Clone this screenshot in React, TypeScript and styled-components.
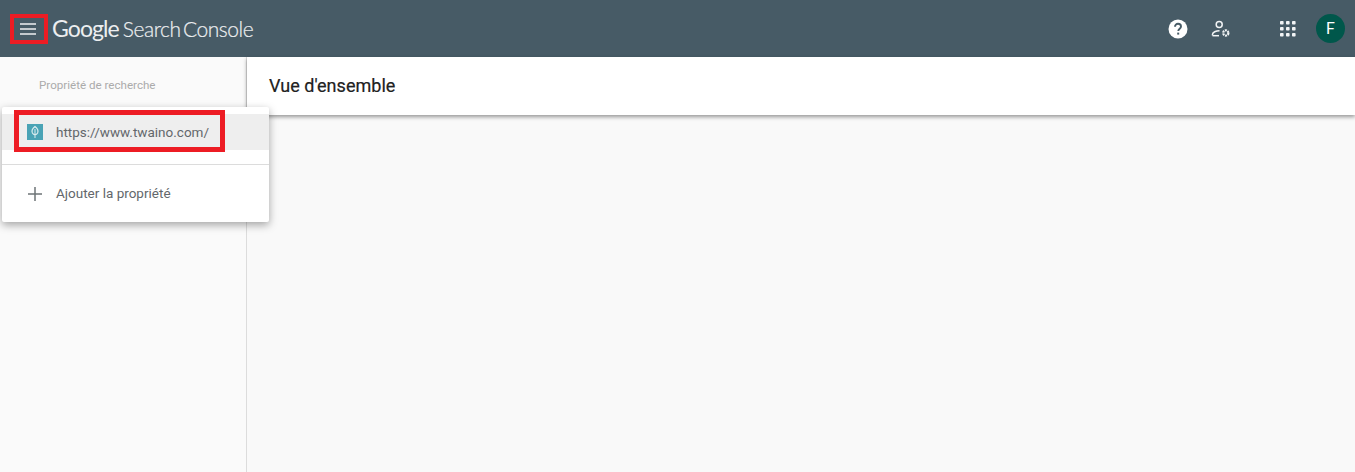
import React from "react";
import styled, { createGlobalStyle } from "styled-components";

const GlobalStyle = createGlobalStyle`
  html, body {
    margin: 0;
    padding: 0;
    height: 100%;
    overflow: hidden;
    background: #fafafa;
    font-family: Roboto, "Liberation Sans", sans-serif;
  }
`;

const Page = styled.div`
  width: 1355px;
  height: 472px;
  display: flex;
  flex-direction: column;
  position: relative;
  overflow: hidden;
`;

const TopBar = styled.header`
  height: 57px;
  flex: none;
  background: #475b66;
  display: flex;
  align-items: center;
  padding: 0 10px;
  box-sizing: border-box;
`;

const MenuButton = styled.button`
  width: 38px;
  height: 30px;
  margin-top: 1px;
  padding: 0 2px 0 0;
  background: transparent;
  border: 4px solid #ed1c24;
  display: flex;
  align-items: center;
  justify-content: center;
  box-sizing: border-box;
`;

const Logo = styled.div`
  margin-left: 5px;
  margin-bottom: 2px;
  color: #eceef0;
  display: flex;
  align-items: baseline;
  font-family: Lato, sans-serif;
  white-space: nowrap;
`;

const LogoGoogle = styled.span`
  font-size: 23px;
  letter-spacing: -0.9px;
  font-weight: 400;
  margin-left: -1px;
`;

const LogoProduct = styled.span`
  font-size: 21px;
  font-weight: 300;
  margin-left: 4px;
  letter-spacing: -0.45px;
  word-spacing: -3px;
  -webkit-text-stroke: 0.2px #eceef0;
`;

const Spacer = styled.div`
  flex: 1;
`;

const IconSlot = styled.div<{ $gap: number }>`
  display: flex;
  margin-left: ${(p) => p.$gap}px;
`;

const Avatar = styled.div`
  width: 29px;
  height: 29px;
  margin-left: 20px;
  border-radius: 50%;
  background: #00574b;
  color: #fff;
  font-size: 16px;
  display: flex;
  align-items: center;
  justify-content: center;
`;

const Body = styled.div`
  flex: 1;
  display: flex;
`;

const SideBar = styled.aside`
  width: 247px;
  flex: none;
  box-sizing: border-box;
  background: #fafafa;
  border-right: 1px solid #dcdcdc;
  padding: 21px 0 0 39px;
`;

const SideLabel = styled.div`
  font-size: 11.6px;
  line-height: 14px;
  color: #ababab;
`;

const Main = styled.main`
  flex: 1;
  background: #f9f9f9;
`;

const TitleBar = styled.div`
  height: 58px;
  box-sizing: border-box;
  background: #fff;
  padding: 0 0 2px 22px;
  display: flex;
  align-items: center;
  font-size: 18px;
  font-weight: 400;
  letter-spacing: 0.02px;
  -webkit-text-stroke: 0.2px #212121;
  color: #212121;
  box-shadow: 0 2px 4px rgba(0, 0, 0, 0.4);
`;

const PropertyMenu = styled.div`
  position: absolute;
  left: 2px;
  top: 107px;
  width: 267px;
  height: 115px;
  background: #fff;
  border-radius: 2px;
  box-shadow: 0 3px 8px rgba(0, 0, 0, 0.35);
  padding-top: 7px;
  box-sizing: border-box;
`;

const PropertyRow = styled.div<{ $selected?: boolean }>`
  height: ${(p) => (p.$selected ? 36 : 57)}px;
  display: flex;
  align-items: center;
  padding-left: 25px;
  background: ${(p) => (p.$selected ? "#eeeeee" : "transparent")};
  color: #63676b;
  font-size: 13.5px;
`;

const PropertyLabel = styled.span<{ $tight?: boolean }>`
  margin-top: ${(p) => (p.$tight ? -2 : 0)}px;
`;

const RowIcon = styled.div`
  width: 16px;
  height: 16px;
  margin-right: 13px;
  display: flex;
  align-items: center;
  justify-content: center;
`;

const Divider = styled.div`
  height: 1px;
  margin-top: 14px;
  background: #dcdcdc;
`;

const UrlHighlight = styled.div`
  position: absolute;
  left: 14px;
  top: 110px;
  width: 211px;
  height: 42px;
  box-sizing: border-box;
  border: 5px solid #ed1c24;
`;

export default function App() {
  return (
    <Page>
      <GlobalStyle />
      <TopBar>
        <MenuButton aria-label="Menu">
          <svg width="18" height="12" viewBox="0 0 18 12">
            <path d="M1 1h16M1 6h16M1 11h16" stroke="#eef0f1" strokeWidth="1.6" fill="none" />
          </svg>
        </MenuButton>
        <Logo>
          <LogoGoogle>Google</LogoGoogle>
          <LogoProduct>Search Console</LogoProduct>
        </Logo>
        <Spacer />
        <IconSlot $gap={0}>
          <svg width="20" height="20" viewBox="0 0 20 20">
            <circle cx="10" cy="10" r="9.5" fill="#fff" />
            <path
              d="M7 7.800c0-1.700 1.300-3 3-3s3 1.200 3 2.800c0 2.100-2.700 2.300-2.700 4.400"
              stroke="#475b66"
              strokeWidth="1.9"
              fill="none"
            />
            <rect x="9.2" y="13.6" width="2" height="2" fill="#475b66" />
          </svg>
        </IconSlot>
        <IconSlot $gap={23}>
          <svg width="20" height="20" viewBox="0 0 20 20" fill="none" stroke="#f2f4f5" strokeWidth="1.5">
            <circle cx="8.2" cy="5.5" r="3" />
            <path d="M1.5 16.5v-1.200c0-2 3.500-3.600 7-3.600" />
            <path d="M1.500 16.700h6.500" />
            <circle cx="14.800" cy="14" r="2.600" strokeWidth="2.200" strokeDasharray="2 0.75" />
          </svg>
        </IconSlot>
        <IconSlot $gap={49}>
          <svg width="16" height="16" viewBox="0 0 16 16" fill="#f2f4f5">
            {[0, 6, 12].flatMap((y) =>
              [0, 6, 12].map((x) => <rect key={`${x}-${y}`} x={x} y={y} width="3.6" height="3.6" rx="0.8" />),
            )}
          </svg>
        </IconSlot>
        <Avatar>F</Avatar>
      </TopBar>
      <Body>
        <SideBar>
          <SideLabel>Propriété de recherche</SideLabel>
        </SideBar>
        <Main>
          <TitleBar>Vue d'ensemble</TitleBar>
        </Main>
      </Body>
      <PropertyMenu>
        <PropertyRow $selected>
          <RowIcon>
            <svg width="16" height="16" viewBox="0 0 16 16">
              <rect width="16" height="16" fill="#4aa3b5" />
              <path d="M8 2.500c2.600 2 3.400 4.600 2.600 6.400-.6 1.200-1.600 1.700-2.600 1.700s-2-.5-2.600-1.700C4.600 7.100 5.400 4.500 8 2.500z" fill="none" stroke="#dcecef" strokeWidth="1.2" />
              <path d="M8 5v9" stroke="#dcecef" strokeWidth="1" />
            </svg>
          </RowIcon>
          <PropertyLabel>https://www.twaino.com/</PropertyLabel>
        </PropertyRow>
        <Divider />
        <PropertyRow>
          <RowIcon>
            <svg width="14" height="14" viewBox="0 0 14 14">
              <path d="M7 0v14M0 7h14" stroke="#6d7477" strokeWidth="1.5" />
            </svg>
          </RowIcon>
          <PropertyLabel $tight>Ajouter la propriété</PropertyLabel>
        </PropertyRow>
      </PropertyMenu>
      <UrlHighlight />
    </Page>
  );
}
